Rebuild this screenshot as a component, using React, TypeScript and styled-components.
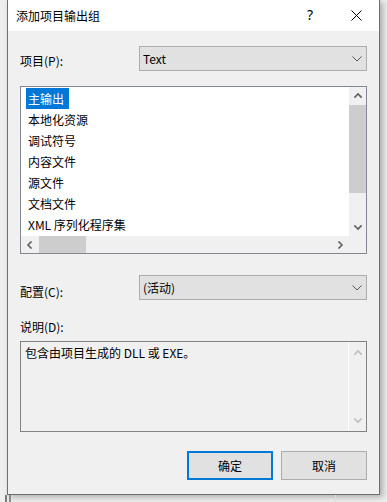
import React from "react";
import styled, { createGlobalStyle, css } from "styled-components";

const GlobalStyle = createGlobalStyle`
  html, body { margin: 0; padding: 0; }
  body {
    background: #eeeeee;
    font-family: "Noto Sans CJK SC", "Noto Sans", sans-serif;
    font-size: 12px;
    color: #000;
  }
  * { box-sizing: border-box; }
`;

const Page = styled.div`
  width: 387px;
  height: 502px;
  overflow: hidden;
  display: flex;
  flex-direction: column;
`;

const Dialog = styled.div`
  margin-left: 7px;
  width: 373px;
  height: 495px;
  flex-shrink: 0;
  border: 1px solid #6e6e6e;
  border-top: none;
  background: #f0f0f0;
  display: flex;
  flex-direction: column;
  box-shadow: 3px 2px 6px rgba(0, 0, 0, 0.28);
`;

const TitleBar = styled.div`
  height: 31px;
  background: #ffffff;
  display: flex;
  align-items: center;
`;

const TitleText = styled.div`
  flex: 1;
  padding-left: 8px;
  line-height: 16px;
  font-size: 12px;
`;

const CaptionButton = styled.div`
  width: 46px;
  height: 31px;
  display: flex;
  align-items: center;
  justify-content: center;
`;

const HelpGlyph = styled.span`
  font-family: "Noto Sans", sans-serif;
  font-size: 14px;
  line-height: 14px;
  margin-top: -1px;
`;

const Body = styled.div`
  flex: 1;
  padding: 15px 12px 14px 12px;
  display: flex;
  flex-direction: column;
`;

const FieldRow = styled.div<{ $top: number }>`
  display: flex;
  align-items: flex-start;
  height: 25px;
  margin-top: ${(p) => p.$top}px;
`;

const RowLabel = styled.div<{ $offset: number }>`
  width: 119px;
  padding-top: ${(p) => p.$offset}px;
  line-height: 16px;
`;

const Combo = styled.div`
  flex: 1;
  height: 25px;
  background: #e1e1e1;
  border: 1px solid #adadad;
  display: flex;
  align-items: center;
  padding: 0 4px 0 3px;
  line-height: 16px;
`;

const ComboText = styled.span`
  flex: 1;
`;

const ListBox = styled.div`
  margin-top: 15px;
  height: 168px;
  border: 1px solid #828790;
  background: #ffffff;
  display: grid;
  grid-template-columns: 1fr 17px;
  grid-template-rows: 1fr 17px;
`;

const Items = styled.div`
  padding: 1px 0 0 5px;
  display: flex;
  flex-direction: column;
  align-items: flex-start;
`;

const Item = styled.div<{ $selected?: boolean }>`
  height: 21px;
  line-height: 21px;
  padding: 0 5px 0 2px;
  white-space: nowrap;
  ${(p) =>
    p.$selected &&
    css`
      background: #0078d7;
      color: #ffffff;
    `}
`;

const VScroll = styled.div`
  background: #f0f0f0;
  display: flex;
  flex-direction: column;
`;

const HScroll = styled.div`
  background: #f0f0f0;
  display: flex;
  align-items: stretch;
`;

const ArrowBtn = styled.div`
  width: 17px;
  height: 17px;
  flex-shrink: 0;
  display: flex;
  align-items: center;
  justify-content: center;
`;

const VThumb = styled.div`
  margin-top: 1px;
  height: 88px;
  background: #cdcdcd;
`;

const TrackFill = styled.div`
  flex: 1;
`;

const HThumb = styled.div`
  margin-left: 1px;
  width: 47px;
  background: #cdcdcd;
`;

const Corner = styled.div`
  background: #f0f0f0;
`;

const SectionLabel = styled.div`
  margin-top: 19px;
  line-height: 16px;
`;

const DescBox = styled.div`
  margin-top: 6px;
  height: 91px;
  border: 1px solid #828282;
  background: #f0f0f0;
  display: flex;
`;

const DescText = styled.div`
  flex: 1;
  padding: 3px 0 0 4px;
  line-height: 16px;
`;

const DescScroll = styled.div`
  width: 18px;
  border-left: 1px solid #ffffff;
  display: flex;
  flex-direction: column;
  justify-content: space-between;
  padding: 2px 0 2px;
`;

const ButtonRow = styled.div`
  margin-top: 19px;
  display: flex;
  justify-content: flex-end;
  gap: 8px;
`;

const Button = styled.div<{ $default?: boolean }>`
  width: 86px;
  height: 29px;
  background: #e1e1e1;
  border: ${(p) => (p.$default ? "2px solid #0078d7" : "1px solid #adadad")};
  display: flex;
  align-items: center;
  justify-content: center;
  line-height: 16px;
`;

const BehindStrip = styled.div`
  height: 8px;
  flex-shrink: 0;
  display: flex;
`;

const BehindEdge = styled.div`
  margin-left: 5px;
  width: 6px;
  border-left: 2px solid #7a7a7a;
  border-right: 2px solid #8a8a8a;
`;

const BehindLine = styled.div`
  margin-left: 324px;
  width: 1px;
  background: #d6dde6;
`;

const Chevron = ({ dir, color = "#606060" }: { dir: "up" | "down" | "left" | "right"; color?: string }) => {
  const paths: Record<string, string> = {
    up: "M1 5 L4 2 L7 5",
    down: "M1 2 L4 5 L7 2",
    left: "M5 1 L2 4 L5 7",
    right: "M2 1 L5 4 L2 7",
  };
  return (
    <svg width="8" height="8" viewBox="0 0 8 8">
      <path d={paths[dir]} fill="none" stroke={color} strokeWidth="1.6" strokeLinecap="square" />
    </svg>
  );
};

const ComboChevron = () => (
  <svg width="10" height="6" viewBox="0 0 10 6">
    <path d="M0.5 0.5 L5 5 L9.5 0.5" fill="none" stroke="#555" strokeWidth="1" />
  </svg>
);

const CloseIcon = () => (
  <svg width="11" height="11" viewBox="0 0 11 11">
    <path d="M0.5 0.5 L10.5 10.5 M10.5 0.5 L0.5 10.5" stroke="#000" strokeWidth="1" />
  </svg>
);

const items = ["主输出", "本地化资源", "调试符号", "内容文件", "源文件", "文档文件", "XML 序列化程序集"];

export default function App() {
  return (
    <Page>
      <GlobalStyle />
      <Dialog>
        <TitleBar>
          <TitleText>添加项目输出组</TitleText>
          <CaptionButton>
            <HelpGlyph>?</HelpGlyph>
          </CaptionButton>
          <CaptionButton>
            <CloseIcon />
          </CaptionButton>
        </TitleBar>
        <Body>
          <FieldRow $top={0}>
            <RowLabel $offset={7}>项目(P):</RowLabel>
            <Combo>
              <ComboText>Text</ComboText>
              <ComboChevron />
            </Combo>
          </FieldRow>
          <ListBox>
            <Items>
              {items.map((it, i) => (
                <Item key={it} $selected={i === 0}>
                  {it}
                </Item>
              ))}
            </Items>
            <VScroll>
              <ArrowBtn>
                <Chevron dir="up" />
              </ArrowBtn>
              <VThumb />
              <TrackFill />
              <ArrowBtn>
                <Chevron dir="down" />
              </ArrowBtn>
            </VScroll>
            <HScroll>
              <ArrowBtn>
                <Chevron dir="left" />
              </ArrowBtn>
              <HThumb />
              <TrackFill />
              <ArrowBtn>
                <Chevron dir="right" />
              </ArrowBtn>
            </HScroll>
            <Corner />
          </ListBox>
          <FieldRow $top={21}>
            <RowLabel $offset={9}>配置(C):</RowLabel>
            <Combo>
              <ComboText>(活动)</ComboText>
              <ComboChevron />
            </Combo>
          </FieldRow>
          <SectionLabel>说明(D):</SectionLabel>
          <DescBox>
            <DescText>包含由项目生成的 DLL 或 EXE。</DescText>
            <DescScroll>
              <ArrowBtn>
                <Chevron dir="up" color="#c0c0c0" />
              </ArrowBtn>
              <ArrowBtn>
                <Chevron dir="down" color="#c0c0c0" />
              </ArrowBtn>
            </DescScroll>
          </DescBox>
          <ButtonRow>
            <Button $default>确定</Button>
            <Button>取消</Button>
          </ButtonRow>
        </Body>
      </Dialog>
      <BehindStrip>
        <BehindEdge />
        <BehindLine />
      </BehindStrip>
    </Page>
  );
}
